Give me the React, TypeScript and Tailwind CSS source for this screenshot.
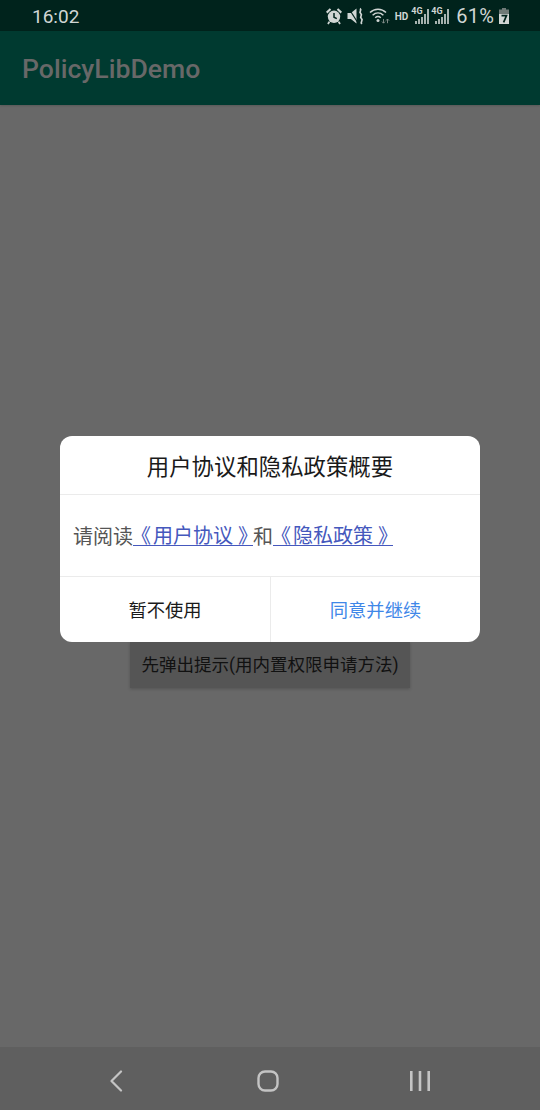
const FONT = { fontFamily: "Roboto" };
const CJK = { fontFamily: '"Noto Sans CJK SC", sans-serif' };
const CJK_TC = { fontFamily: '"Noto Sans CJK TC", sans-serif' };

function AlarmIcon() {
  return (
    <svg width="18" height="18" viewBox="0 0 18 18" className="text-[#d0d6d4]">
      <circle cx="9" cy="9.8" r="6.2" fill="currentColor" />
      <path d="M9 6v4.2l2.8 1.4" fill="none" stroke="#00231c" strokeWidth="1.5" />
      <path d="M1 4.8 4.8 1.2 6.2 2.8 2.4 6.4zM17 4.8 13.2 1.2 11.8 2.8 15.6 6.4z" fill="currentColor" />
      <path d="M4.4 14.6 3 17M13.6 14.6 15 17" stroke="currentColor" strokeWidth="1.8" />
    </svg>
  );
}

function VibrateMuteIcon() {
  return (
    <svg width="18" height="18" viewBox="0 0 18 18" className="text-[#d0d6d4]">
      <path d="M0.5 6h3.4L9.5 1.5v15L3.9 12H0.5z" fill="currentColor" />
      <path d="M1.5 1 11 16" stroke="#00231c" strokeWidth="1.2" />
      <path d="M13 1.5c2.6 2 -1.8 3 .7 5s-1.8 3 .7 5 -1.8 3 .4 5.5" fill="none" stroke="currentColor" strokeWidth="1.7" />
    </svg>
  );
}

function WifiIcon() {
  return (
    <svg width="21" height="18" viewBox="0 0 21 18" className="text-[#d0d6d4]">
      <path d="M1 5.5C5.5 1 12.5 1 17 5.5M3.6 8.2C6.8 5.2 11.2 5.2 14.4 8.2M6.2 10.8C8 9.2 10 9.2 11.8 10.8" fill="none" stroke="currentColor" strokeWidth="1.5" />
      <circle cx="9" cy="13.6" r="1.5" fill="currentColor" />
      <path d="M14.5 12v4M13 14.6l1.5 1.6 1.5-1.6M18.5 16.2v-4M17 13.6l1.5-1.6 1.5 1.6" fill="none" stroke="#8a9491" strokeWidth="0.9" />
    </svg>
  );
}

function SignalIcon() {
  return (
    <div className="relative w-[19px] h-[18px]">
      <span className="absolute left-0 top-0 text-[9px] leading-[9px] font-bold text-[#d0d6d4]">4G</span>
      <svg width="19" height="18" viewBox="0 0 19 18" className="absolute inset-0 text-[#d0d6d4]">
        <path d="M5 17v-3M8 17v-5M11 17v-7M14 17v-10M17 17V2" stroke="currentColor" strokeWidth="1.6" />
      </svg>
    </div>
  );
}

function BatteryIcon() {
  return (
    <svg width="12" height="18" viewBox="0 0 12 18" className="text-[#d0d6d4]">
      <path d="M4 1h4v1.6h3V17H1V2.6h3z" fill="#6f7a77" />
      <path d="M1 7h10v10H1z" fill="currentColor" />
      <path d="M3.5 8.6h5L5.6 15.4" fill="none" stroke="#00231c" strokeWidth="1.7" />
    </svg>
  );
}

function PolicyLink({ name }: { name: string }) {
  return (
    <span className="inline-flex h-[21px] leading-[20px] text-[#4558bd] border-b border-[#4558bd]">
      <span className="relative -left-[2px]" style={CJK_TC}>《</span>
      {name}
      <span className="pl-[5px] tracking-[-5px]" style={CJK_TC}>》</span>
    </span>
  );
}

export default function App() {
  return (
    <div className="relative w-[540px] h-[1110px] flex flex-col overflow-hidden bg-[#686868]" style={FONT}>
      {/* Status bar */}
      <div className="h-[31px] shrink-0 bg-[#00231c] flex items-center justify-between pl-[32px] pr-[30px] text-[#d0d6d4]">
        <span className="text-[19px] leading-none mt-[2px]">16:02</span>
        <div className="flex items-center mt-[1px]">
          <AlarmIcon />
          <div className="w-[4px]" />
          <VibrateMuteIcon />
          <div className="w-[4px]" />
          <WifiIcon />
          <span className="ml-[5px] text-[10px] font-bold">HD</span>
          <div className="ml-[3px] flex items-center gap-[1px]">
            <SignalIcon />
            <SignalIcon />
          </div>
          <span className="ml-[6px] text-[20px] leading-none tracking-[0.2px]">61%</span>
          <div className="w-[4px]" />
          <BatteryIcon />
        </div>
      </div>

      {/* App bar */}
      <div className="h-[74px] shrink-0 bg-[#003a30] flex items-center pl-[22px] shadow-[0_1px_2px_rgba(0,0,0,0.15)]">
        <span className="text-[26.6px] leading-none font-medium text-[#686868] mt-[2px]">PolicyLibDemo</span>
      </div>

      {/* Content */}
      <main className="flex-1 flex flex-col items-center pt-[537px]">
        <button
          className="w-[280px] h-[46px] bg-[#555555] text-[#111] text-[17.5px] shadow-[0_1px_3px_rgba(0,0,0,0.2)]"
          style={{ fontFamily: '"Roboto", "Noto Sans CJK SC", sans-serif' }}
        >
          先弹出提示(用内置权限申请方法)
        </button>
      </main>

      {/* Nav bar */}
      <div className="h-[63px] shrink-0 bg-[#5f5f5f] flex items-center justify-between pl-[107px] pr-[110px] pt-[4px]">
        <svg width="18" height="22" viewBox="0 0 18 22" fill="none" stroke="#c4c4c4" strokeWidth="2.2" strokeLinecap="round" strokeLinejoin="round">
          <path d="M14 1.5 4.5 11l9.5 9.5" />
        </svg>
        <svg width="22" height="22" viewBox="0 0 22 22" fill="none" stroke="#c4c4c4" strokeWidth="2.4">
          <rect x="1.5" y="1.5" width="19" height="19" rx="6.5" />
        </svg>
        <svg width="20" height="20" viewBox="0 0 20 20" fill="none" stroke="#c4c4c4" strokeWidth="2.6">
          <path d="M1.3 0v20M10 0v20M18.7 0v20" />
        </svg>
      </div>

      {/* Dialog */}
      <div className="absolute left-[60px] top-[436px] w-[420px] h-[206px] bg-white rounded-[12px] flex flex-col overflow-hidden" style={CJK}>
        <div className="h-[59px] shrink-0 flex items-center justify-center pt-[2px] border-b border-[#ebebeb] text-[22.4px] text-[#1a1a1a]">
          用户协议和隐私政策概要
        </div>
        <div className="h-[82px] shrink-0 flex items-center pl-[13px] border-b border-[#ebebeb] text-[20px] text-[#555]">
          请阅读
          <PolicyLink name="用户协议" />
          和
          <PolicyLink name="隐私政策" />
        </div>
        <div className="flex-1 flex text-[18.3px]">
          <div className="w-[211px] flex items-center justify-center border-r border-[#ebebeb] text-[#1a1a1a]">暂不使用</div>
          <div className="flex-1 flex items-center justify-center text-[#3f87e8]">同意并继续</div>
        </div>
      </div>
    </div>
  );
}
